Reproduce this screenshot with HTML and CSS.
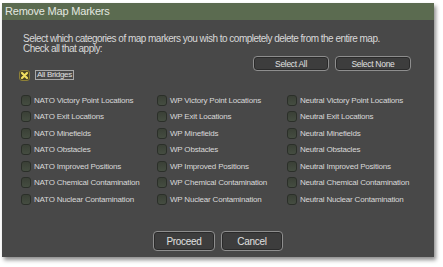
FILE: index.html
```html
<!DOCTYPE html>
<html>
<head>
<meta charset="utf-8">
<link rel="stylesheet" href="styles.css">
</head>
<body>
<div class="dialog">
  <div class="titlebar">Remove Map Markers</div>
  <div class="content">
    <p class="intro">Select which categories of map markers you wish to completely delete from the entire map.<br>Check all that apply:</p>
    <div class="top-actions">
      <button class="btn small">Select All</button>
      <button class="btn small">Select None</button>
    </div>
    <div class="bridges">
      <span class="cb checked"><svg width="11" height="11" viewBox="0 0 11 11"><rect x="0.5" y="0.5" width="10" height="10" rx="2.5" fill="#4a4526" stroke="#8d8038"/><path d="M3 3 L8 8 M8 3 L3 8" stroke="#f0e060" stroke-width="2.2" stroke-linecap="round"/></svg></span>
      <span class="focus-label">All Bridges</span>
    </div>
    <div class="grid">
      <label class="item"><span class="cb"></span>NATO Victory Point Locations</label>
      <label class="item"><span class="cb"></span>WP Victory Point Locations</label>
      <label class="item"><span class="cb"></span>Neutral Victory Point Locations</label>
      <label class="item"><span class="cb"></span>NATO Exit Locations</label>
      <label class="item"><span class="cb"></span>WP Exit Locations</label>
      <label class="item"><span class="cb"></span>Neutral Exit Locations</label>
      <label class="item"><span class="cb"></span>NATO Minefields</label>
      <label class="item"><span class="cb"></span>WP Minefields</label>
      <label class="item"><span class="cb"></span>Neutral Minefields</label>
      <label class="item"><span class="cb"></span>NATO Obstacles</label>
      <label class="item"><span class="cb"></span>WP Obstacles</label>
      <label class="item"><span class="cb"></span>Neutral Obstacles</label>
      <label class="item"><span class="cb"></span>NATO Improved Positions</label>
      <label class="item"><span class="cb"></span>WP Improved Positions</label>
      <label class="item"><span class="cb"></span>Neutral Improved Positions</label>
      <label class="item"><span class="cb"></span>NATO Chemical Contamination</label>
      <label class="item"><span class="cb"></span>WP Chemical Contamination</label>
      <label class="item"><span class="cb"></span>Neutral Chemical Contamination</label>
      <label class="item"><span class="cb"></span>NATO Nuclear Contamination</label>
      <label class="item"><span class="cb"></span>WP Nuclear Contamination</label>
      <label class="item"><span class="cb"></span>Neutral Nuclear Contamination</label>
    </div>
    <div class="footer">
      <button class="btn big">Proceed</button>
      <button class="btn big">Cancel</button>
    </div>
  </div>
</div>
</body>
</html>
```
FILE: styles.css
```css
html, body {
  margin: 0;
  padding: 0;
  background: #ffffff;
}
body {
  font-family: "Liberation Sans", Arial, sans-serif;
  width: 443px;
  height: 267px;
  overflow: hidden;
}
.dialog {
  margin: 3px 0 0 2px;
  width: 432px;
  height: 254px;
  background: #484848;
  box-shadow: 2px 3px 4px rgba(0,0,0,0.45);
  display: flex;
  flex-direction: column;
}
.titlebar {
  height: 17px;
  line-height: 17px;
  background: #5b6b50;
  color: #e4e8e0;
  font-size: 11px;
  padding-left: 3px;
  letter-spacing: -0.2px;
}
.content {
  flex: 1;
  display: flex;
  flex-direction: column;
  padding: 14px 23px 0 19px;
}
.intro {
  margin: 0 0 0 2px;
  color: #d8d8d8;
  font-size: 10px;
  line-height: 10px;
  letter-spacing: -0.52px;
}
.top-actions {
  display: flex;
  justify-content: flex-end;
  gap: 6px;
  margin-top: 2px;
}
.btn {
  font-family: "Liberation Sans", Arial, sans-serif;
  color: #e0e0e0;
  background: #3d3d3d;
  border: 1px solid #8e8e8e;
  border-radius: 4px;
  box-shadow: inset 0 0 0 1px #2a2a2a;
  padding: 0;
  letter-spacing: -0.3px;
}
.btn.small {
  width: 76px;
  height: 15px;
  font-size: 8.5px;
}
.btn.big {
  width: 62px;
  height: 20px;
  font-size: 10px;
}
.bridges {
  display: flex;
  align-items: center;
  gap: 5px;
  margin-top: -1px;
  margin-left: -2px;
  height: 10px;
}
.focus-label {
  border: 1px solid #a8a8a8;
  color: #e0e0e0;
  font-size: 8px;
  line-height: 8px;
  padding: 0 1px;
  letter-spacing: -0.3px;
}
.cb {
  display: inline-block;
  width: 10px;
  height: 11px;
  box-sizing: border-box;
  border: 1px solid #2b2f29;
  border-radius: 3px;
  background: linear-gradient(#3a4036, #454d41);
  flex: none;
}
.cb.checked {
  border: none;
  background: none;
  width: 11px;
  height: 11px;
}
.cb.checked svg { display: block; }
.grid {
  display: grid;
  grid-template-columns: 136px 130px 1fr;
  grid-auto-rows: 16.5px;
  margin-top: 12px;
}
.item {
  display: flex;
  align-items: center;
  gap: 3px;
  color: #d8d8d8;
  font-size: 8px;
  letter-spacing: -0.2px;
  white-space: nowrap;
}
.footer {
  display: flex;
  justify-content: center;
  gap: 6px;
  margin-top: auto;
  margin-bottom: 6px;
  margin-left: -19px;
  margin-right: -23px;
}
```
